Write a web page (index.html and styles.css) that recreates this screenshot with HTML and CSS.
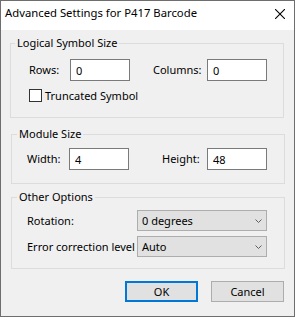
FILE: index.html
```html
<!DOCTYPE html>
<html>
<head>
<meta charset="utf-8">
<link rel="stylesheet" href="styles.css">
</head>
<body>
<div class="window">
  <div class="titlebar">
    <span class="title">Advanced Settings for P417 Barcode</span>
    <svg class="close" width="10" height="10" viewBox="0 0 10 10"><path d="M0 0L10 10M10 0L0 10" stroke="#000" stroke-width="1.1" fill="none"/></svg>
  </div>
  <div class="client">
    <fieldset class="group g1">
      <legend class="legend l1">Logical Symbol Size</legend>
      <div class="row row-a">
        <span class="lbl lbl-rows">Rows:</span>
        <input class="edit" value="0">
        <span class="lbl lbl-cols">Columns:</span>
        <input class="edit" value="0">
      </div>
      <div class="row row-check">
        <span class="checkbox"></span>
        <span class="check-text">Truncated Symbol</span>
      </div>
    </fieldset>
    <fieldset class="group g2">
      <legend class="legend">Module Size</legend>
      <div class="row row-b">
        <span class="lbl lbl-width">Width:</span>
        <input class="edit" value="4">
        <span class="lbl lbl-height">Height:</span>
        <input class="edit" value="48">
      </div>
    </fieldset>
    <fieldset class="group g3">
      <legend class="legend">Other Options</legend>
      <div class="row row-c first">
        <span class="lbl lbl-opt">Rotation:</span>
        <div class="combo"><span>0 degrees</span><svg width="7" height="4" viewBox="0 0 7 4"><polyline points="0.5,0.5 3.5,3.5 6.5,0.5" stroke="#606060" stroke-width="1" fill="none"/></svg></div>
      </div>
      <div class="row row-c">
        <span class="lbl lbl-opt">Error correction level</span>
        <div class="combo"><span>Auto</span><svg width="7" height="4" viewBox="0 0 7 4"><polyline points="0.5,0.5 3.5,3.5 6.5,0.5" stroke="#606060" stroke-width="1" fill="none"/></svg></div>
      </div>
    </fieldset>
    <div class="buttons">
      <div class="btn btn-default">OK</div>
      <div class="btn">Cancel</div>
    </div>
  </div>
</div>
</body>
</html>
```
FILE: styles.css
```css
* { box-sizing: border-box; }
body {
  margin: 0;
  background: #fff;
  font-family: "Noto Sans", sans-serif;
  font-size: 11px;
  color: #000;
  white-space: nowrap;
}
.window {
  width: 295px;
  height: 317px;
  border: 1px solid #6e6e6e;
  display: flex;
  flex-direction: column;
}
.titlebar {
  height: 29px;
  padding: 4px 9px 0 4px;
  background: #fff;
  display: flex;
  justify-content: space-between;
  align-items: flex-start;
}
.title { line-height: 16px; font-size: 11.3px; }
.close { margin-top: 4px; }
.client {
  flex: 1;
  background: #f0f0f0;
  padding-top: 5px;
  display: flex;
  flex-direction: column;
}
.group {
  margin: 0;
  padding: 0;
  border: 1px solid #dcdcdc;
  min-width: 0;
  width: 274px;
}
.g1 { margin-left: 9px; padding-bottom: 15px; }
.g2 { margin-left: 10px; margin-top: 8px; padding-bottom: 13px; }
.g3 { margin-left: 10px; margin-top: 5px; padding-bottom: 11px; }
.legend {
  padding: 0 2px;
  margin-left: 5px;
  line-height: 16px;
}
.l1 { margin-left: 4px; }
.row {
  display: flex;
  align-items: center;
}
.lbl { line-height: 16px; flex: none; }
.row-a { margin-top: 8px; padding-left: 18px; }
.lbl-rows { width: 41px; }
.lbl-cols { width: 54px; margin-left: 23px; }
.row-check { margin-top: 8px; padding-left: 18px; height: 13px; }
.checkbox {
  width: 13px;
  height: 13px;
  border: 1px solid #333;
  background: #fff;
  flex: none;
}
.check-text { margin-left: 3px; line-height: 13px; }
.row-b { margin-top: 6px; padding-left: 15px; }
.lbl-width { width: 42px; }
.lbl-height { width: 45px; margin-left: 33px; }
.edit {
  width: 60px;
  height: 22px;
  border: 1px solid #7a7a7a;
  background: #fff;
  padding: 0 0 0 5px;
  margin: 0;
  font-family: inherit;
  font-size: 11px;
  color: #000;
  outline: none;
  flex: none;
}
.row-c { margin-top: 5px; padding-left: 15px; }
.lbl-opt { width: 110px; }
.combo {
  width: 130px;
  height: 21px;
  background: #e1e1e1;
  border: 1px solid #adadad;
  padding: 0 4px 0 4px;
  display: flex;
  align-items: center;
  justify-content: space-between;
  line-height: 16px;
}
.buttons {
  margin-top: 12px;
  padding-right: 10px;
  display: flex;
  justify-content: flex-end;
  gap: 13px;
}
.btn {
  width: 73px;
  height: 21px;
  background: #e1e1e1;
  border: 1px solid #adadad;
  display: flex;
  align-items: center;
  justify-content: center;
  line-height: 16px;
}
.btn-default { border: 2px solid #0078d7; }
```
